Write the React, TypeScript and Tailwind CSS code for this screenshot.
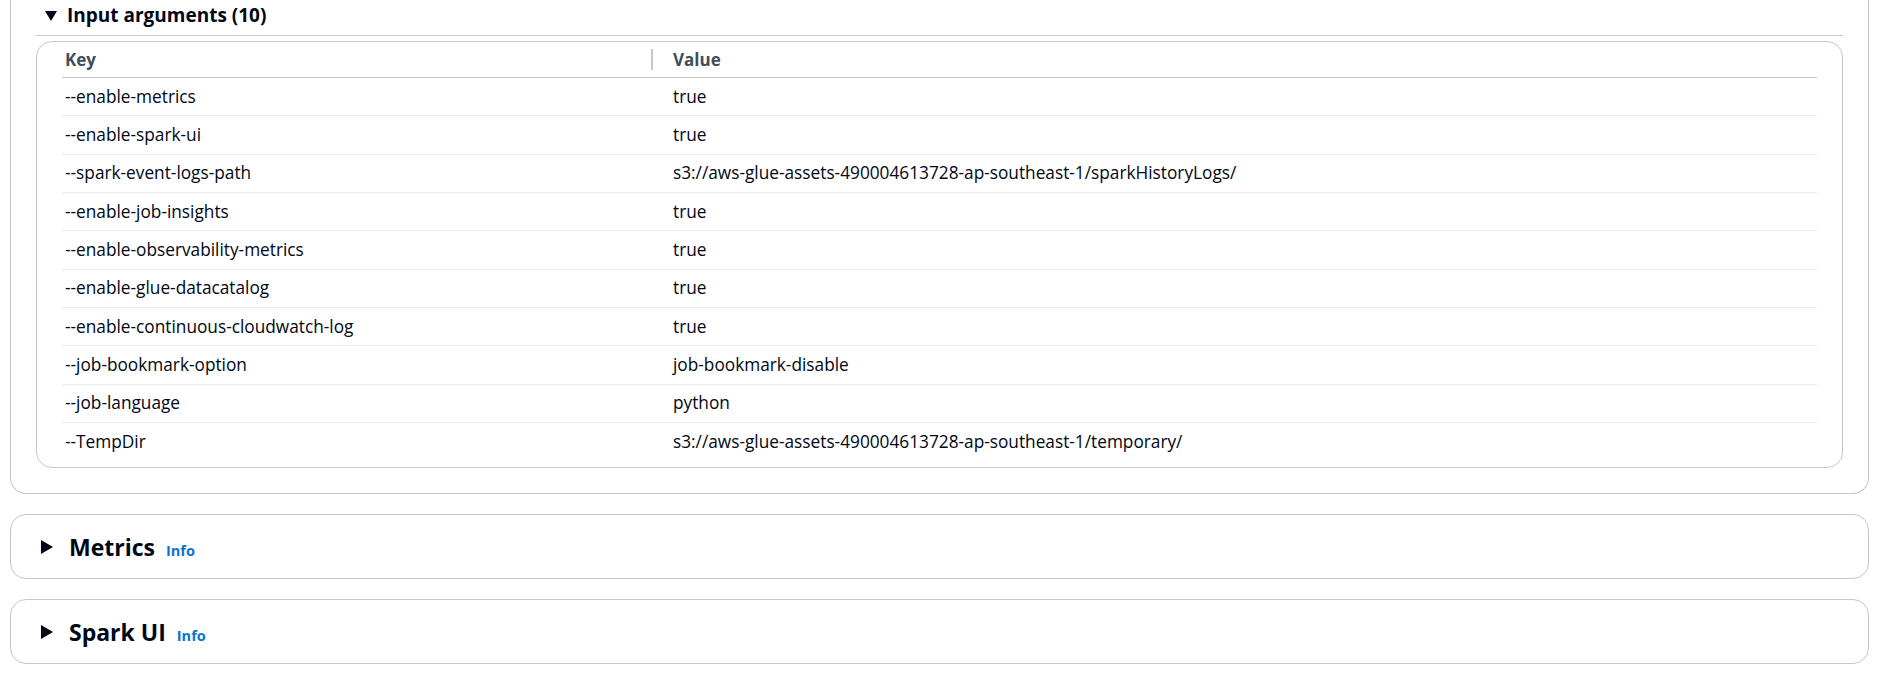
import { ReactNode } from "react";

const args: [string, string][] = [
  ["--enable-metrics", "true"],
  ["--enable-spark-ui", "true"],
  ["--spark-event-logs-path", "s3://aws-glue-assets-490004613728-ap-southeast-1/sparkHistoryLogs/"],
  ["--enable-job-insights", "true"],
  ["--enable-observability-metrics", "true"],
  ["--enable-glue-datacatalog", "true"],
  ["--enable-continuous-cloudwatch-log", "true"],
  ["--job-bookmark-option", "job-bookmark-disable"],
  ["--job-language", "python"],
  ["--TempDir", "s3://aws-glue-assets-490004613728-ap-southeast-1/temporary/"],
];

const CaretDown = () => (
  <svg width="12" height="10" viewBox="0 0 12 10" className="shrink-0">
    <polygon points="0,0 12,0 6,10" fill="#000716" />
  </svg>
);

const CaretRight = () => (
  <svg width="12" height="14" viewBox="0 0 12 14" className="shrink-0">
    <polygon points="0,0 12,7 0,14" fill="#000716" />
  </svg>
);

// collapsed section, just the header line
const Section = ({ title, children }: { title: string; children?: ReactNode }) => (
  <div className="mt-[20px] h-[65px] border border-[#c6c6cd] rounded-[16px] flex items-center pl-[30px]">
    <CaretRight />
    <div className="ml-[16px] flex items-baseline">
      <span className="text-[23px] font-bold text-[#000716]">{title}</span>
      <span className="ml-[11px] text-[14.5px] font-bold text-[#0972d3]">Info</span>
    </div>
    {children}
  </div>
);

export default function App() {
  return (
    <div className="bg-white min-h-[680px] px-[10px] font-['Open_Sans',sans-serif] text-[#000716]">
      <div className="border border-t-0 border-[#c6c6cd] rounded-b-[16px] px-[25px] pb-[25px]">
        <div className="h-[36px] border-b border-[#c6c6cd] flex items-center pl-[9px] pb-[4px]">
          <CaretDown />
          <span className="ml-[10px] text-[19px] font-bold leading-none">Input arguments (10)</span>
        </div>
        <div className="mt-[5px] border border-[#c6c6cd] rounded-[16px] px-[25px] pb-[6px]">
          <div className="h-[36px] border-b border-[#c6c6cd] flex items-center text-[17px] font-bold text-[#414d5c]">
            <div className="w-[608px] pl-[3px] pr-[17px] flex items-center justify-between">
              <span>Key</span>
              <span className="w-[2px] h-[21px] bg-[#c6c6cd]" />
            </div>
            <div className="pl-[3px]">Value</div>
          </div>
          {args.map(([k, v], i) => (
            <div
              key={k}
              className={
                "h-[38.33px] flex items-center text-[17.25px] " +
                (i < args.length - 1 ? "border-b border-[#e9ebed]" : "")
              }
            >
              <div className="w-[608px] pl-[3px]">{k}</div>
              <div className="pl-[3px]">{v}</div>
            </div>
          ))}
        </div>
      </div>
      <Section title="Metrics" />
      <Section title="Spark UI" />
    </div>
  );
}
